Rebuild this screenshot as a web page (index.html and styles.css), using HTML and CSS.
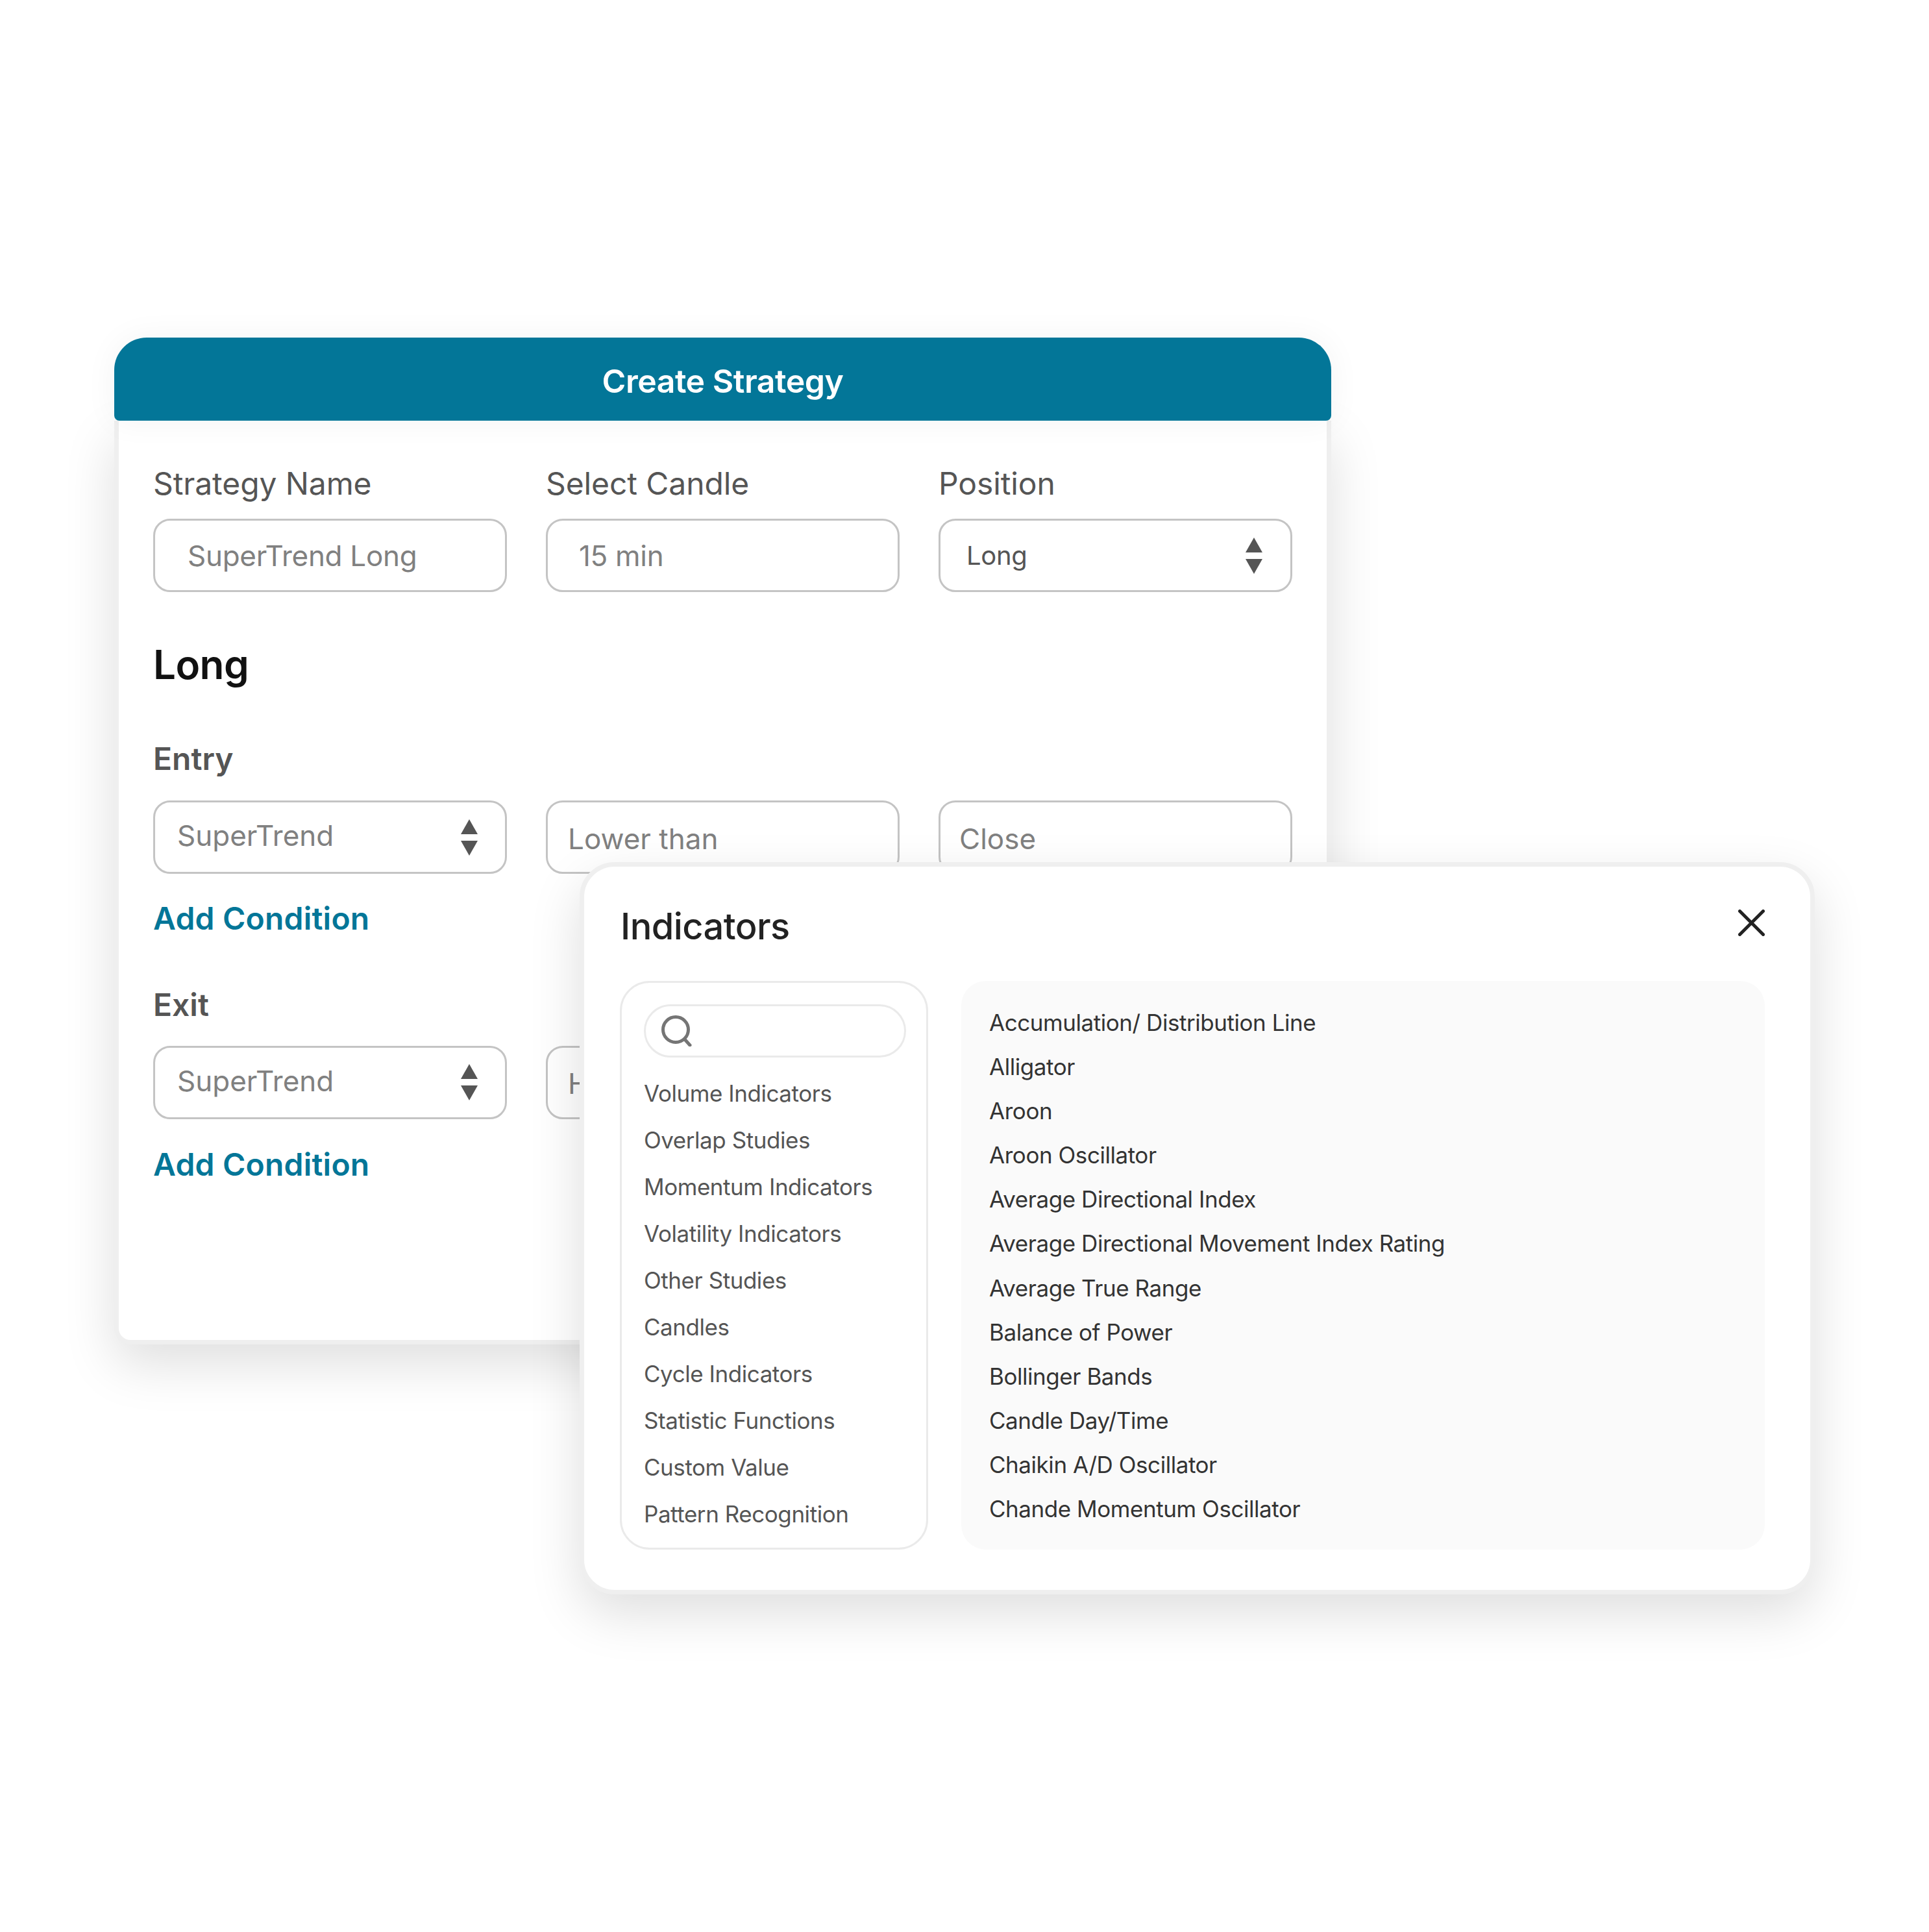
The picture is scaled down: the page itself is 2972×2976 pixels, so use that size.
FILE: index.html
```html
<!DOCTYPE html>
<html lang="en">
<head>
<meta charset="utf-8">
<title>Create Strategy</title>
<link rel="stylesheet" href="styles.css">
</head>
<body>
<main class="scene">
  <section class="strategy">
    <header class="strategy-head">Create Strategy</header>
    <div class="strategy-body">
      <div class="row row-top">
        <div class="col">
          <label class="label">Strategy Name</label>
          <div class="field pad-55">SuperTrend Long</div>
        </div>
        <div class="col">
          <label class="label">Select Candle</label>
          <div class="field pad-51">15 min</div>
        </div>
        <div class="col">
          <label class="label">Position</label>
          <div class="field pad-45 dark">Long
            <svg class="updown" viewBox="0 0 26 56"><path d="M13 0 26 23H0Z"/><path d="M0 33H26L13 56Z"/></svg>
          </div>
        </div>
      </div>
      <h2 class="section-title">Long</h2>
      <h3 class="group-title entry">Entry</h3>
      <div class="row">
        <div class="field pad-39 lift">SuperTrend
          <svg class="updown" viewBox="0 0 26 56"><path d="M13 0 26 23H0Z"/><path d="M0 33H26L13 56Z"/></svg>
        </div>
        <div class="field pad-37 drop">Lower than</div>
        <div class="field pad-32 drop">Close</div>
      </div>
      <a class="add">Add Condition</a>
      <h3 class="group-title exit">Exit</h3>
      <div class="row">
        <div class="field pad-39 lift">SuperTrend
          <svg class="updown" viewBox="0 0 26 56"><path d="M13 0 26 23H0Z"/><path d="M0 33H26L13 56Z"/></svg>
        </div>
        <div class="field pad-37 drop">Higher than</div>
      </div>
      <a class="add add-last">Add Condition</a>
    </div>
  </section>

  <section class="modal">
    <div class="modal-head">
      <h2 class="modal-title">Indicators</h2>
      <svg class="close" viewBox="0 0 41 41"><path d="M2.5 2.5 38.5 38.5M38.5 2.5 2.5 38.5"/></svg>
    </div>
    <div class="modal-main">
      <aside class="cats">
        <div class="search">
          <svg class="search-icon" viewBox="0 0 48 48"><circle cx="22" cy="22" r="19.5"/><path d="M35.5 36.5 44 46"/></svg>
        </div>
        <ul class="cat-list">
          <li>Volume Indicators</li>
          <li>Overlap Studies</li>
          <li>Momentum Indicators</li>
          <li>Volatility Indicators</li>
          <li>Other Studies</li>
          <li>Candles</li>
          <li>Cycle Indicators</li>
          <li>Statistic Functions</li>
          <li>Custom Value</li>
          <li>Pattern Recognition</li>
        </ul>
      </aside>
      <ul class="items">
        <li>Accumulation/ Distribution Line</li>
        <li>Alligator</li>
        <li>Aroon</li>
        <li>Aroon Oscillator</li>
        <li>Average Directional Index</li>
        <li>Average Directional Movement Index Rating</li>
        <li>Average True Range</li>
        <li>Balance of Power</li>
        <li>Bollinger Bands</li>
        <li>Candle Day/Time</li>
        <li>Chaikin A/D Oscillator</li>
        <li>Chande Momentum Oscillator</li>
      </ul>
    </div>
  </section>
</main>
</body>
</html>
```

FILE: styles.css
```css
* { box-sizing: border-box; }
html, body { margin: 0; padding: 0; background: #fff; }
body { font-family: Inter, "Noto Sans", sans-serif; }
.scene { position: relative; width: 2972px; height: 2976px; overflow: hidden; }

/* Windows on a free canvas */
.strategy { position: absolute; left: 176px; top: 520px; width: 1875px; }
.modal {
  position: absolute; left: 893px; top: 1328px; width: 1903px; height: 1128px;
  background: #fff; border: 7px solid #efefef; border-radius: 54px;
  padding: 0 70px 62px 55px;
  box-shadow: 0 30px 80px rgba(0,0,0,.13);
}

.strategy-head {
  position: relative; z-index: 1;
  height: 128px; padding-top: 6px; background: #037698; color: #fff;
  border-radius: 50px 50px 8px 8px;
  display: flex; align-items: center; justify-content: center;
  font-size: 50px; font-weight: 600; letter-spacing: -0.5px;
  box-shadow: 0 0 50px rgba(0,0,0,.05);
}
.strategy-body {
  height: 1423px; background: #fff;
  border: 7px solid #efefef; border-top: 0;
  border-radius: 0 0 25px 25px;
  padding: 0 52px 0 53px;
  box-shadow: 0 30px 80px rgba(0,0,0,.13);
}

.row { display: grid; grid-template-columns: repeat(3, 545px); column-gap: 60px; }
.row-top { padding-top: 68px; }
.col { display: flex; flex-direction: column; }

.label { font-size: 48px; line-height: 58px; color: #555; letter-spacing: -0.1px; margin-bottom: 25px; }

.field {
  height: 113px; border: 3px solid #c4c4c4; border-radius: 26px; background: #fff;
  display: flex; align-items: center; justify-content: space-between;
  font-size: 44px; color: #808080; letter-spacing: -0.3px; white-space: nowrap;
}
.dark { color: #555; font-size: 40px; }
.pad-55 { padding-left: 50px; }
.pad-51 { padding-left: 48px; }
.pad-45 { padding-left: 40px; padding-right: 43px; }
.pad-39 { padding-left: 34px; padding-right: 42px; letter-spacing: 0; }
.pad-37 { padding-left: 31px; letter-spacing: 0; }
.pad-32 { padding-left: 29px; letter-spacing: 0; }
.lift { padding-bottom: 5px; }
.drop { padding-top: 4px; }
.lift .updown { margin-top: 5px; }

.updown { width: 26px; height: 56px; fill: #555; flex: none; }

.section-title { margin: 75px 0 0; font-size: 62px; line-height: 74px; font-weight: 600; color: #111; letter-spacing: -0.6px; }
.group-title { margin: 0; font-size: 48px; line-height: 58px; font-weight: 600; color: #555; letter-spacing: 0; }
.entry { margin-top: 79px; margin-bottom: 35px; }
.exit { margin-top: 74.5px; margin-bottom: 34px; }

.add { display: block; margin-top: 40px; font-size: 48px; line-height: 58px; font-weight: 600; color: #037698; letter-spacing: 0.2px; }
.add-last { margin-top: 41px; }

.modal-head { height: 176px; display: flex; align-items: flex-start; justify-content: space-between; }
.modal-title { margin: 59px 0 0 1px; font-size: 56px; line-height: 66px; font-weight: 500; color: #222; letter-spacing: -0.6px; }
.close { width: 41px; height: 41px; margin-top: 66px; fill: none; stroke: #222; stroke-width: 5; stroke-linecap: round; }

.modal-main { display: flex; gap: 51px; height: 876px; }
.cats {
  width: 475px; height: 100%; border: 3px solid #eaeaea; border-radius: 46px;
  padding: 33px 31px 0 34px;
}
.search {
  height: 82px; border: 3px solid #eaeaea; border-radius: 41px;
  display: flex; align-items: center; padding-left: 24px;
}
.search-icon { width: 48px; height: 48px; fill: none; stroke: #757575; stroke-width: 5; stroke-linecap: round; }

.cat-list, .items { list-style: none; margin: 0; padding: 0; }
.cat-list { margin-top: 19px; font-size: 35px; color: #555; letter-spacing: -0.45px; }
.cat-list li { height: 72px; line-height: 72px; }

.items {
  flex: 1; height: 100%; background: #fafafa; border-radius: 38px;
  padding: 30px 43px; font-size: 35px; color: #333; letter-spacing: -0.45px;
}
.items li { height: 68.1px; line-height: 68.1px; }
```
